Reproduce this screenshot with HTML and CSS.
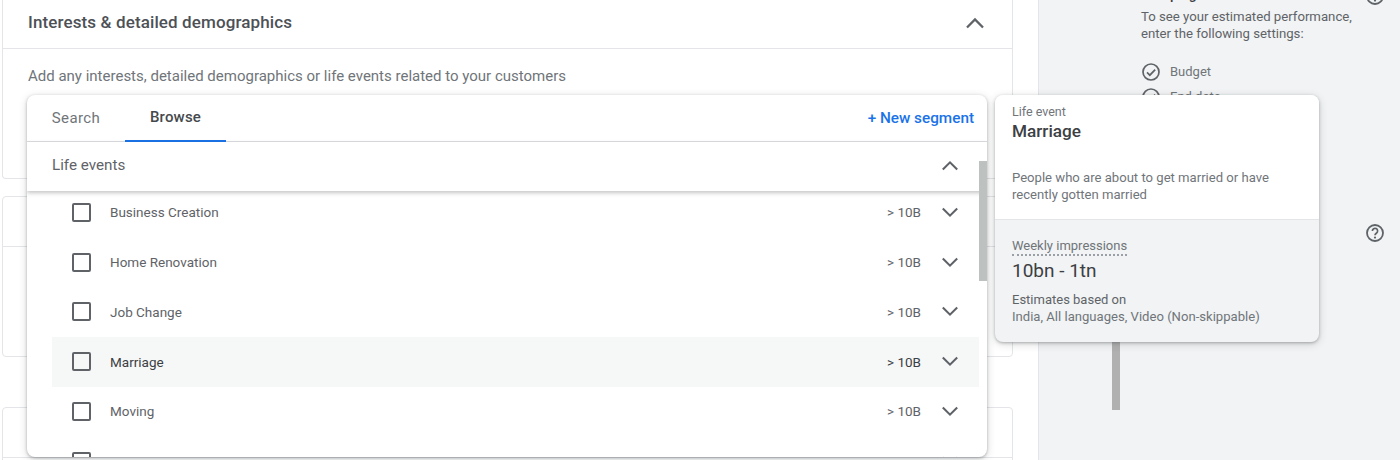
FILE: index.html
```html
<!DOCTYPE html>
<html lang="en">
<head>
<meta charset="utf-8">
<title>Interests &amp; detailed demographics</title>
<link rel="stylesheet" href="styles.css">
</head>
<body>
<svg class="defs" aria-hidden="true">
  <symbol id="up" viewBox="0 0 20 12"><path d="M2 10.5 10 2.5l8 8" fill="none" stroke="currentColor" stroke-width="2.3"/></symbol>
  <symbol id="down" viewBox="0 0 20 12"><path d="M2 1.5l8 8 8-8" fill="none" stroke="currentColor" stroke-width="2.3"/></symbol>
  <symbol id="check" viewBox="0 0 20 20"><circle cx="10" cy="10" r="8" fill="none" stroke="currentColor" stroke-width="1.7"/><path d="M6 10.4l2.8 2.8L14.2 7.6" fill="none" stroke="currentColor" stroke-width="1.7"/></symbol>
  <symbol id="help" viewBox="0 0 20 20"><circle cx="10" cy="10" r="8" fill="none" stroke="currentColor" stroke-width="1.8"/><path d="M7.4 8a2.6 2.6 0 1 1 4.2 2c-.9.7-1.6 1.1-1.6 2.2" fill="none" stroke="currentColor" stroke-width="1.7"/><circle cx="10" cy="14.6" r="1.1" fill="currentColor"/></symbol>
</svg>
<div class="page">
  <main class="left">
    <section class="card card-one">
      <header class="card-head">
        <h2>Interests &amp; detailed demographics</h2>
        <svg class="chev-lg"><use href="#up"/></svg>
      </header>
      <p class="card-hint">Add any interests, detailed demographics or life events related to your customers</p>
    </section>
    <section class="card card-two"><div class="card-rule"></div></section>
    <section class="card card-three"><div class="card-rule"></div></section>
  </main>
  <aside class="panel">
    <div class="panel-top">
      <div class="estimate">
        <h3>Campaign estimates</h3>
        <p>To see your estimated performance,<br>enter the following settings:</p>
        <ul>
          <li><svg class="ic"><use href="#check"/></svg>Budget</li>
          <li><svg class="ic"><use href="#check"/></svg>End date</li>
        </ul>
      </div>
      <svg class="ic help-top"><use href="#help"/></svg>
    </div>
    <div class="help-row"><svg class="ic"><use href="#help"/></svg></div>
    <div class="bar"></div>
  </aside>
</div>

<div class="popover">
  <nav class="tabs">
    <span class="tab">Search</span>
    <span class="tab active">Browse</span>
    <a class="new-seg">+ New segment</a>
  </nav>
  <div class="crumb">
    <span>Life events</span>
    <svg class="chev"><use href="#up"/></svg>
  </div>
  <div class="scroller">
    <ul class="rows">
      <li class="row"><i class="box"></i><span class="name">Business Creation</span><span class="val">&gt; 10B</span><svg class="chev"><use href="#down"/></svg></li>
      <li class="row"><i class="box"></i><span class="name">Home Renovation</span><span class="val">&gt; 10B</span><svg class="chev"><use href="#down"/></svg></li>
      <li class="row"><i class="box"></i><span class="name">Job Change</span><span class="val">&gt; 10B</span><svg class="chev"><use href="#down"/></svg></li>
      <li class="row hover"><i class="box"></i><span class="name">Marriage</span><span class="val">&gt; 10B</span><svg class="chev"><use href="#down"/></svg></li>
      <li class="row"><i class="box"></i><span class="name">Moving</span><span class="val">&gt; 10B</span><svg class="chev"><use href="#down"/></svg></li>
      <li class="row"><i class="box"></i><span class="name">New Business</span><span class="val">&gt; 10B</span><svg class="chev"><use href="#down"/></svg></li>
    </ul>
  </div>
  <div class="thumb"></div>
</div>

<div class="tip">
  <div class="tip-top">
    <div class="tip-kind">Life event</div>
    <div class="tip-title">Marriage</div>
    <p class="tip-desc">People who are about to get married or have recently gotten married</p>
  </div>
  <div class="tip-bottom">
    <span class="tip-label">Weekly impressions</span>
    <div class="tip-range">10bn - 1tn</div>
    <div class="tip-basis">Estimates based on</div>
    <div class="tip-where">India, All languages, Video (Non-skippable)</div>
  </div>
</div>
</body>
</html>
```

FILE: styles.css
```css
* { box-sizing: border-box; }
html, body { margin: 0; height: 460px; overflow: hidden; background: #fff; }
body { font-family: Roboto, "Liberation Sans", sans-serif; color: #5f6368; position: relative; }
h2, h3, p, ul { margin: 0; padding: 0; font-weight: 400; }
ul { list-style: none; }
.defs { display: none; }

.page { display: flex; height: 460px; }
.left { flex: 0 0 1039px; padding-left: 2px; border-right: 1px solid #e3e5e8; }
.card { width: 1011px; background: #fff; border: 1px solid #e3e5e8; border-radius: 0 0 4px 4px; }
.card-one { height: 179px; border-top: 0; }
.card-two { height: 161px; margin-top: 17px; border-radius: 4px; }
.card-three { height: 120px; margin-top: 50px; border-radius: 4px; }
.card-rule { height: 50px; border-bottom: 1px solid #e3e5e8; }
.card-head { height: 49px; display: flex; align-items: center; justify-content: space-between; padding: 0 27px 5px 25px; border-bottom: 1px solid #e3e5e8; }
.card-head h2 { font-size: 17px; font-weight: 500; color: #4d5156; letter-spacing: .12px; }
.card-hint { font-size: 15px; line-height: 18px; padding: 18px 0 0 25px; color: #70757a; }
.chev-lg { width: 20px; height: 12px; color: #5f6368; margin-top: 3px; }

.panel { flex: 1; min-width: 0; background: #f1f3f4; }
.panel-top { display: flex; padding: 0 15px 0 102px; height: 225px; justify-content: space-between; }
.estimate { width: 225px; margin-top: -15px; font-size: 13.2px; line-height: 17px; color: #5f6368; }
.estimate h3 { font-size: 14px; line-height: 18px; margin-bottom: 5px; font-weight: 500; color: #3c4043; }
.estimate ul { margin-top: 17px; }
.estimate li { display: flex; align-items: center; gap: 9px; height: 25px; font-size: 13px; color: #70757a; }
.ic { width: 20px; height: 20px; color: #5f6368; display: block; flex: none; }
.help-top { margin-top: -14px; }
.help-row { display: flex; justify-content: flex-end; padding-right: 15px; height: 20px; margin-top: -1px; }
.help-row .ic { margin-top: -1px; }
.bar { width: 8px; height: 166px; margin: 0 0 0 73px; background: #b0b0b0; }

.popover { position: absolute; left: 27px; top: 95px; width: 960px; height: 362px; background: #fff; border-radius: 8px; box-shadow: 0 1px 3px rgba(60,64,67,.35), 0 2px 8px rgba(60,64,67,.2); overflow: hidden; }
.tabs { height: 47px; display: flex; align-items: stretch; padding: 0 13px 0 0; border-bottom: 1px solid #dadce0; font-size: 15px; }
.tab { display: flex; align-items: center; justify-content: center; width: 98px; padding-bottom: 1px; color: #70757a; letter-spacing: .4px; }
.tab.active { width: 101px; color: #45494d; font-weight: 500; letter-spacing: .2px; border-bottom: 2px solid #1a73e8; position: relative; margin-bottom: -1px; }
.new-seg { margin-left: auto; align-self: center; font-size: 15.3px; font-weight: 500; color: #1a73e8; }
.crumb { height: 49px; display: flex; align-items: center; justify-content: space-between; padding: 0 28px 3px 25px; font-size: 15.2px; color: #5f6368; box-shadow: 0 2px 4px rgba(60,64,67,.3); position: relative; z-index: 2; background: #fff; }
.chev { width: 18px; height: 11px; color: #5f6368; display: block; flex: none; }
.scroller { height: 266px; overflow: hidden; padding: 0 8px 0 25px; }
.rows { margin-top: -3.6px; }
.row { height: 49.8px; display: flex; align-items: center; padding: 0 20px; font-size: 13.5px; color: #5f6368; }
.row.hover { background: #f6f8f8; color: #3c4043; }
.box { width: 19px; height: 19px; border: 2px solid #5f6368; border-radius: 2px; flex: none; }
.name { margin-left: 19px; flex: 1; }
.val { margin-right: 20px; }
.thumb { position: absolute; right: 0; top: 66px; width: 8px; height: 120px; background: #bdc1c0; z-index: 3; }

.tip { position: absolute; left: 995px; top: 95px; width: 324px; height: 247px; border-radius: 8px; overflow: hidden; background: #f1f3f4; box-shadow: 0 1px 3px rgba(60,64,67,.35), 0 2px 8px rgba(60,64,67,.2); }
.tip-top { height: 125px; background: #fff; border-bottom: 1px solid #e3e5e8; padding: 9px 17px 0; }
.tip-kind { font-size: 12.5px; line-height: 16px; color: #70757a; }
.tip-title { font-size: 17.2px; line-height: 23px; font-weight: 500; color: #3c4043; }
.tip-desc { font-size: 13.1px; line-height: 17px; margin-top: 26px; color: #70757a; }
.tip-bottom { padding: 15px 17px 0; }
.tip-label { font-size: 13px; line-height: 17px; color: #70757a; border-bottom: 2px dotted #9aa0a6; display: inline-block; }
.tip-range { font-size: 19px; line-height: 24px; margin-top: 3px; color: #3c4043; }
.tip-basis { font-size: 13px; line-height: 17px; margin-top: 8px; color: #5f6368; }
.tip-where { font-size: 13.1px; line-height: 17px; color: #70757a; }
```
